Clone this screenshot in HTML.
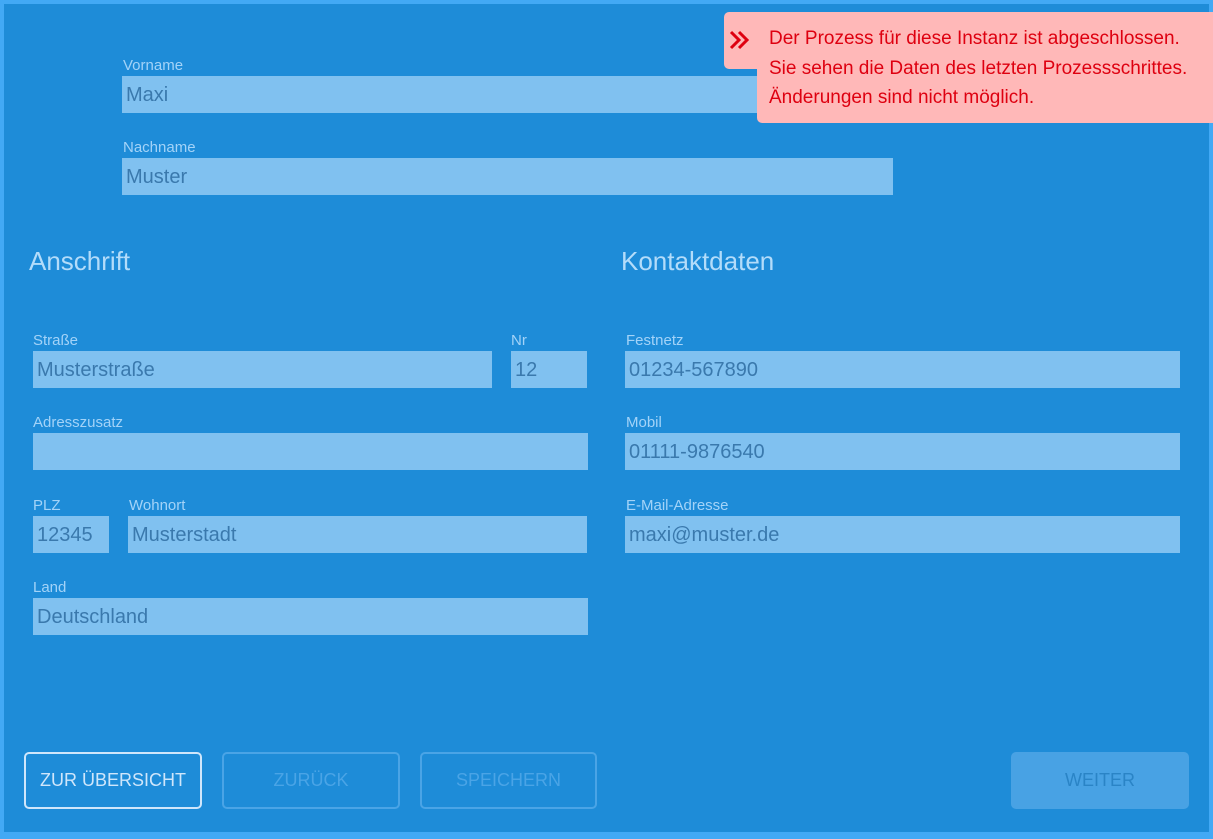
<!DOCTYPE html>
<html><head><meta charset="utf-8"><style>
*{box-sizing:border-box;margin:0;padding:0}
body{width:1213px;height:839px;background:#42a9f5;position:relative;overflow:hidden;font-family:"Liberation Sans",sans-serif}
.main{position:absolute;left:4px;top:4px;width:1205px;height:828px;background:#1e8cd8}
.l{position:absolute;color:#a3d3f8;font-size:15px;line-height:16px;margin-top:1px}
.i{position:absolute;background:#80c1f0;height:37px;color:#3a79ad;font-size:20px;line-height:38px;padding-left:4px;white-space:nowrap;overflow:hidden}
.h{position:absolute;color:#b3dcfa;font-size:26px;line-height:30px}
.b{position:absolute;top:752px;height:57px;border:2px solid #cfe6fb;border-radius:5px;color:#cfe6fb;font-size:18px;text-align:center;line-height:53px}
.b.d{border-color:#4aa4e6;color:#4aa4e6}
.alert{position:absolute;background:#ffb8b8;color:#de0010;font-size:19px}
</style></head><body>
<div class="main"></div>
<div class="l" style="left:123px;top:57px">Vorname</div>
<div class="i" style="left:122px;top:76px;width:771px">Maxi</div>
<div class="l" style="left:123px;top:139px">Nachname</div>
<div class="i" style="left:122px;top:158px;width:771px">Muster</div>
<div class="h" style="left:29px;top:246px">Anschrift</div>
<div class="h" style="left:621px;top:246px">Kontaktdaten</div>
<div class="l" style="left:33px;top:332px">Straße</div>
<div class="i" style="left:33px;top:351px;width:459px">Musterstraße</div>
<div class="l" style="left:511px;top:332px">Nr</div>
<div class="i" style="left:511px;top:351px;width:76px">12</div>
<div class="l" style="left:33px;top:414px">Adresszusatz</div>
<div class="i" style="left:33px;top:433px;width:555px"></div>
<div class="l" style="left:33px;top:497px">PLZ</div>
<div class="i" style="left:33px;top:516px;width:76px">12345</div>
<div class="l" style="left:129px;top:497px">Wohnort</div>
<div class="i" style="left:128px;top:516px;width:459px">Musterstadt</div>
<div class="l" style="left:33px;top:579px">Land</div>
<div class="i" style="left:33px;top:598px;width:555px">Deutschland</div>
<div class="l" style="left:626px;top:332px">Festnetz</div>
<div class="i" style="left:625px;top:351px;width:555px">01234-567890</div>
<div class="l" style="left:626px;top:414px">Mobil</div>
<div class="i" style="left:625px;top:433px;width:555px">01111-9876540</div>
<div class="l" style="left:626px;top:497px">E-Mail-Adresse</div>
<div class="i" style="left:625px;top:516px;width:555px">maxi@muster.de</div>
<div class="b" style="left:24px;width:178px">ZUR ÜBERSICHT</div>
<div class="b d" style="left:222px;width:178px">ZURÜCK</div>
<div class="b d" style="left:420px;width:177px">SPEICHERN</div>
<div class="b" style="left:1011px;width:178px;background:#48a2e4;border:none;color:#2a84c6;line-height:57px">WEITER</div>
<div class="alert" style="left:724px;top:12px;width:60px;height:57px;border-radius:5px"></div>
<div class="alert" style="left:757px;top:12px;width:456px;height:111px;border-radius:5px 0 0 5px"></div>
<svg style="position:absolute;left:729px;top:30px" width="22" height="20" viewBox="0 0 22 20"><path d="M2 2l8 8-8 8M10 2l8 8-8 8" fill="none" stroke="#de0010" stroke-width="3"/></svg>
<div class="alert" style="left:769px;top:24px;background:none;line-height:29.5px;white-space:nowrap">Der Prozess für diese Instanz ist abgeschlossen.<br>Sie sehen die Daten des letzten Prozessschrittes.<br>Änderungen sind nicht möglich.</div>
</body></html>
